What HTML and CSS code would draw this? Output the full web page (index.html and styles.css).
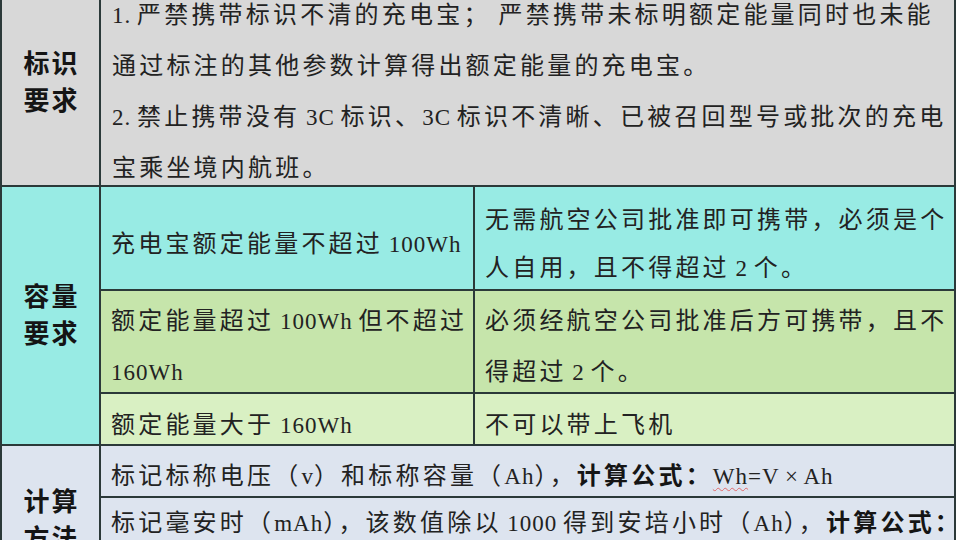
FILE: index.html
```html
<!DOCTYPE html>
<html lang="zh-CN">
<head>
<meta charset="utf-8">
<title>充电宝携带规定</title>
<link rel="stylesheet" href="styles.css">
</head>
<body>
<div class="sheet">
  <div class="label gray r1"><p class="txt">标识<br>要求</p></div>
  <div class="cell gray r1 wide">
    <p class="txt"><span class="en">1. </span>严禁携带标识不清的充电宝；<span class="gap"></span>严禁携带未标明额定能量同时也未能<br>通过标注的其他参数计算得出额定能量的充电宝。<br><span class="en">2. </span>禁止携带没有<span class="en"> 3C </span>标识、<span class="en">3C </span>标识不清晰、已被召回型号或批次的充电<br>宝乘坐境内航班。</p>
  </div>

  <div class="label teal cap"><p class="txt">容量<br>要求</p></div>
  <div class="cell teal"><p class="txt">充电宝额定能量不超过<span class="en"> 100Wh</span></p></div>
  <div class="cell teal tight"><p class="txt">无需航空公司批准即可携带，必须是个<br>人自用，且不得超过<span class="en"> 2 </span>个。</p></div>

  <div class="cell green"><p class="txt">额定能量超过<span class="en"> 100Wh </span>但不超过<br><span class="en">160Wh</span></p></div>
  <div class="cell green"><p class="txt">必须经航空公司批准后方可携带，且不<br>得超过<span class="en"> 2 </span>个。</p></div>

  <div class="cell lime"><p class="txt">额定能量大于<span class="en"> 160Wh</span></p></div>
  <div class="cell lime"><p class="txt">不可以带上飞机</p></div>

  <div class="label blue calc"><p class="txt">计算<br>方法</p></div>
  <div class="cell blue wide"><p class="txt">标记标称电压（<span class="en">v</span>）和标称容量（<span class="en">Ah</span>），<b>计算公式：</b><span class="en"><span class="spell">Wh</span>=V × Ah</span></p></div>
  <div class="cell blue wide top"><p class="txt">标记毫安时（<span class="en">mAh</span>），该数值除以<span class="en"> 1000 </span>得到安培小时（<span class="en">Ah</span>），<b>计算公式：</b></p></div>
</div>
</body>
</html>
```

FILE: styles.css
```css
html, body {
  margin: 0;
  padding: 0;
  background: #ffffff;
  overflow: hidden;
}

.sheet {
  display: grid;
  grid-template-columns: 97px 372px 479px;
  grid-template-rows: 197px 102px 101px 50px 50px 98px;
  gap: 2px;
  padding: 2px;
  width: max-content;
  margin-top: -14px;
  background: #2b3939;
  font-family: "Liberation Serif", "Noto Sans CJK SC", serif;
  color: #222222;
}

.txt {
  margin: 0;
}

.gray { background: #d8d8d8; }
.teal { background: #98ebe4; }
.green { background: #c6e5ab; }
.lime { background: #d9f0c3; }
.blue { background: #dde4ef; }

.label {
  display: flex;
  align-items: center;
  justify-content: center;
  text-align: center;
  font-size: 26px;
  line-height: 37px;
  font-weight: 700;
  letter-spacing: 2px;
  padding-left: 2px;
  color: #151515;
}

.r1 { grid-row: 1; }
.label.r1 { grid-column: 1; padding-bottom: 8px; }
.cap { grid-column: 1; grid-row: 2 / 5; }
.calc { grid-column: 1; grid-row: 5 / 7; }

.cell {
  display: flex;
  flex-direction: column;
  justify-content: center;
  padding: 10px 10px 0 10px;
  font-size: 24px;
  line-height: 51px;
  letter-spacing: 3.2px;
  white-space: nowrap;
  min-height: 0;
}

.cell.wide { grid-column: 2 / 4; }
.cell.r1 { padding-left: 11px; }
.cell.teal { padding-top: 13px; }
.cell.tight { line-height: 48px; }
.cell.lime { padding-top: 12px; }
.cell.top { justify-content: flex-start; padding-top: 0; }

.gap {
  display: inline-block;
  width: 8px;
}

.cell b {
  font-weight: 700;
  color: #151515;
}

.en {
  font-size: 23px;
  letter-spacing: 1px;
  word-spacing: -1px;
}

.spell {
  text-decoration: underline wavy #e06a6a;
  text-decoration-thickness: 1px;
  text-underline-offset: 3px;
}
```
